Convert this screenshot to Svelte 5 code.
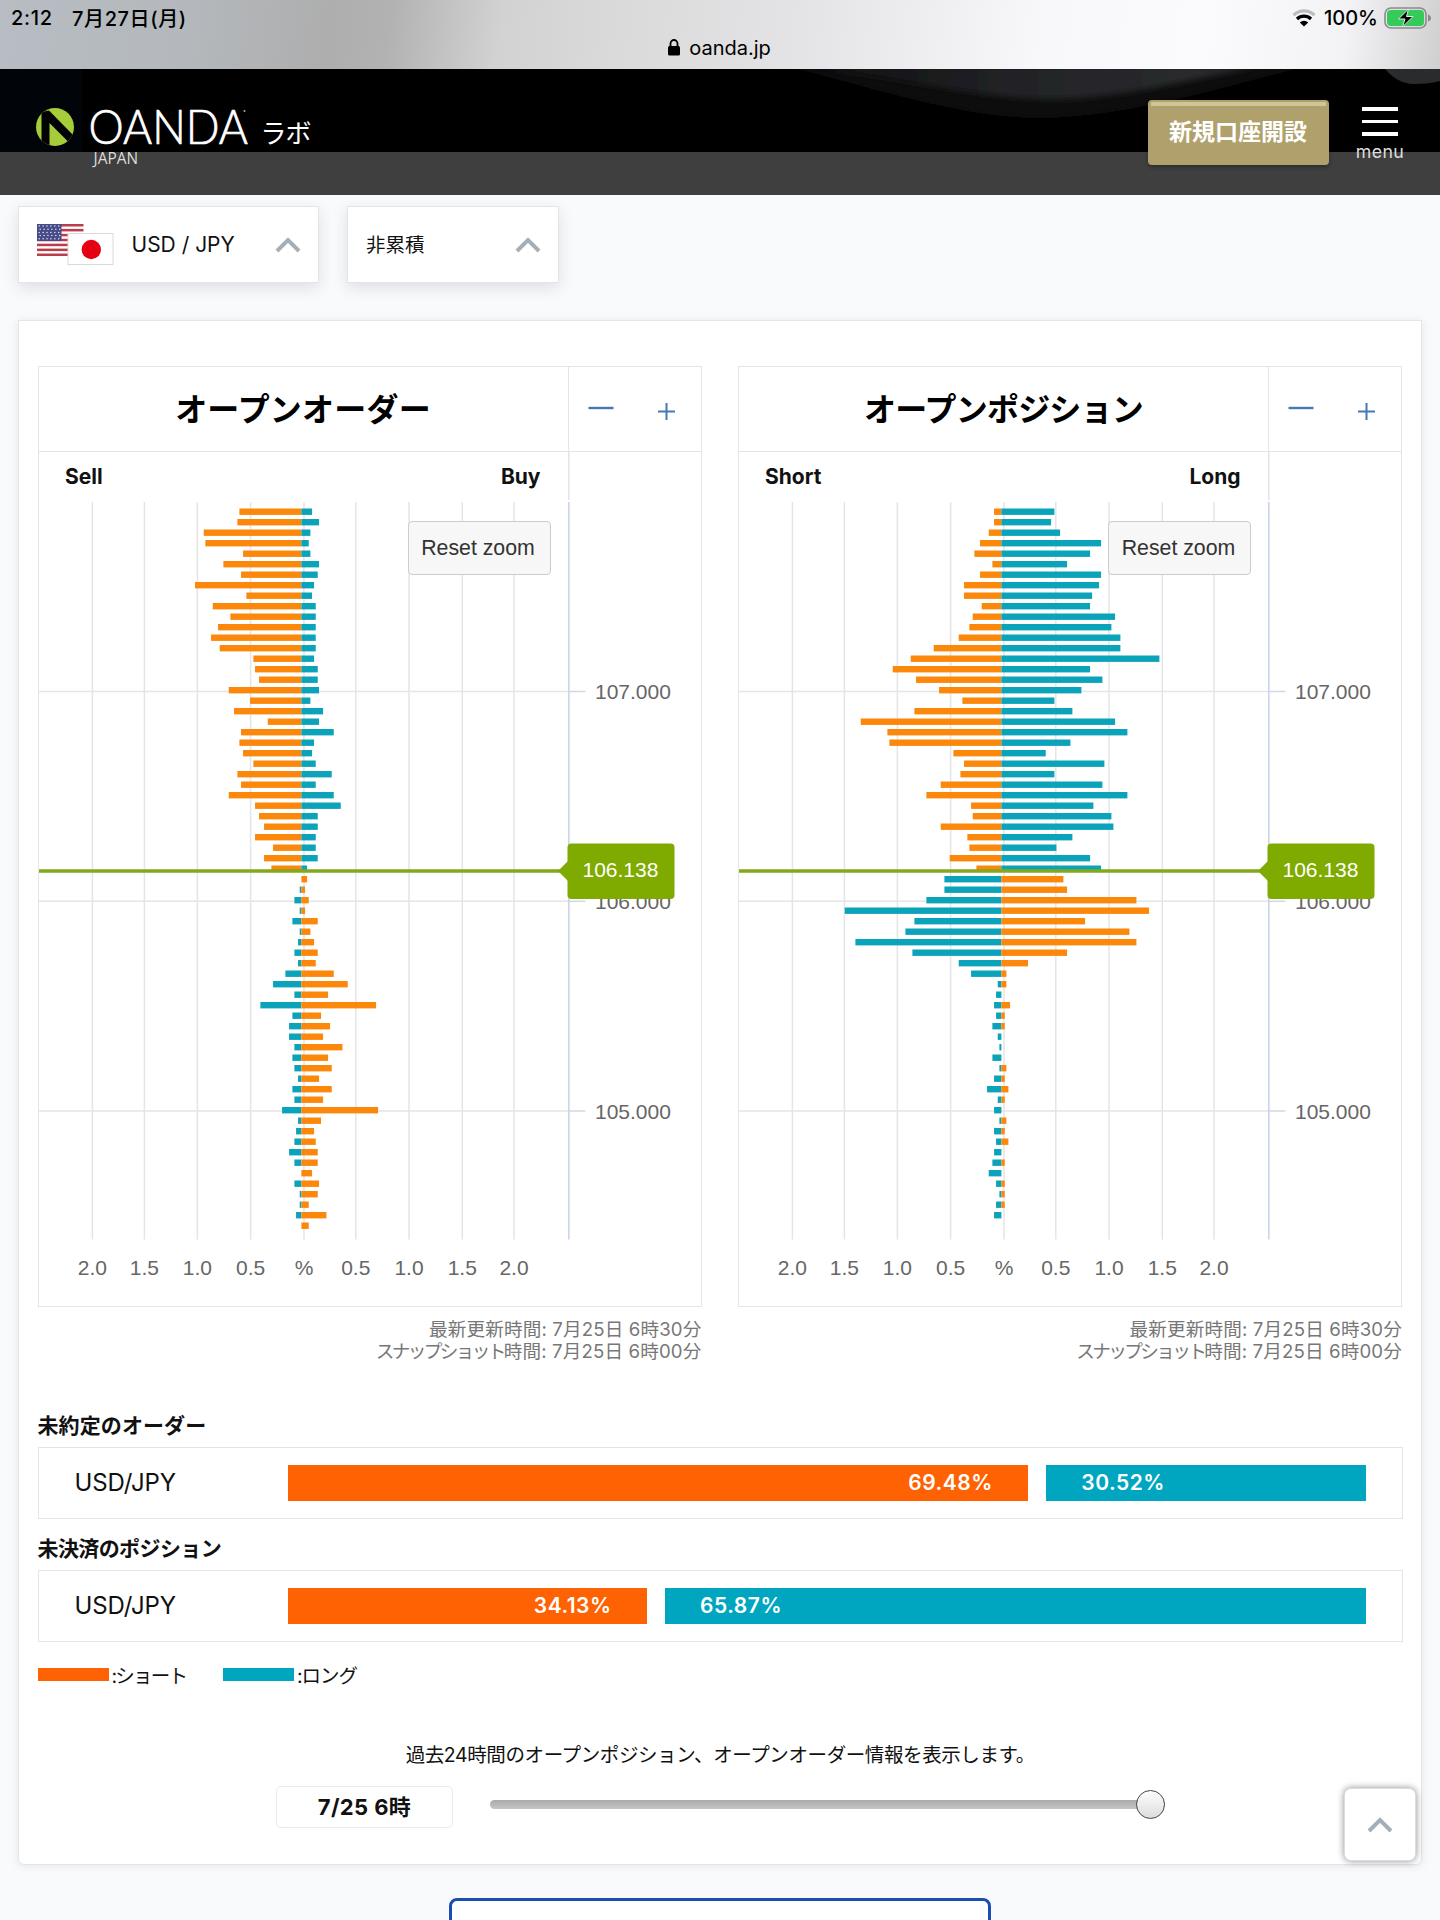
<script>
  // Bar lengths per price level, from high to low: [left, right] in thirds of a pixel.
  const orders = [
    [186, 32], [192, 53], [293, 27], [288, 22], [175, 27], [234, 53], [181, 49], [319, 38], [165, 32], [266, 43],
    [213, 43], [250, 43], [271, 43], [245, 43], [144, 38], [139, 49], [127, 49], [218, 53], [154, 27], [202, 65],
    [101, 53], [181, 97], [186, 38], [175, 32], [144, 43], [192, 91], [181, 43], [218, 97], [139, 118], [127, 49],
    [112, 49], [139, 43], [85, 43], [112, 49], [90, 17],
    [0, 17], [5, 11], [21, 22], [5, 11], [27, 49], [5, 27], [10, 38], [21, 49], [10, 43], [48, 97],
    [85, 139], [21, 80], [123, 224], [27, 59], [37, 86], [37, 65], [21, 123], [27, 80], [21, 91], [10, 53],
    [27, 91], [21, 65], [58, 230], [10, 59], [16, 38], [21, 43], [37, 49], [21, 49], [0, 32], [21, 53],
    [5, 49], [5, 22], [16, 75], [0, 22]
  ];
  const positions = [
    [22, 159], [22, 149], [38, 176], [64, 299], [81, 266], [27, 197], [64, 299], [112, 293], [112, 272], [59, 266],
    [86, 341], [96, 330], [128, 357], [203, 357], [272, 474], [326, 266], [256, 303], [187, 240], [117, 159], [261, 213],
    [422, 341], [342, 378], [336, 207], [144, 133], [112, 309], [123, 159], [182, 303], [225, 378], [91, 276], [86, 330],
    [182, 336], [102, 213], [96, 165], [155, 266], [75, 299],
    [171, 186], [171, 197], [225, 405], [470, 443], [261, 251], [288, 384], [438, 405], [267, 197], [128, 80], [91, 15],
    [11, 15], [16, 0], [22, 26], [16, 10], [27, 10], [11, 0], [6, 0], [27, 0], [6, 15], [22, 10],
    [43, 21], [11, 10], [22, 0], [6, 15], [22, 10], [16, 21], [22, 0], [27, 10], [38, 0], [16, 10],
    [6, 10], [16, 10], [22, 0]
  ];
  const charts = [
    { title: 'オープンオーダー', tight: false, left: 'Sell', right: 'Buy', rows: orders },
    { title: 'オープンポジション', tight: true, left: 'Short', right: 'Long', rows: positions }
  ];
  const ratios = [
    { heading: '未約定のオーダー', tight: false, short: 69.48, long: 30.52 },
    { heading: '未決済のポジション', tight: true, short: 34.13, long: 65.87 }
  ];
  const columns = [
    [91.4, '2.0'], [143.4, '1.5'], [196.4, '1.0'], [249.6, '0.5'], [303, '%'],
    [354.8, '0.5'], [408, '1.0'], [461.3, '1.5'], [513, '2.0']
  ];
  const levels = [[691.5, '107.000'], [901.3, '106.000'], [1111, '105.000']];
  const CENTER = 300.4;
  const FIRST_BELOW = 35;
  const rowTop = (i) => 508.5 + i * 10.5;
</script>

{#snippet chevron()}
  <svg class="chevron" width="26" height="16" viewBox="0 0 26 16"><path d="M2 14 13 3l11 11" fill="none" stroke="#a3afb9" stroke-width="4" /></svg>
{/snippet}

<div class="screen">
  <div class="status">
    <div class="status-row">
      <span class="time">2:12</span>
      <span class="date">7月27日(月)</span>
      <span class="grow"></span>
      <svg class="wifi" width="24" height="18" viewBox="0 0 24 18" fill="none" stroke-width="3.2">
        <path d="M1.5 6.2a15 15 0 0 1 21 0" stroke="#bdbdbf" />
        <path d="M5 10a10 10 0 0 1 14 0" stroke="#000" />
        <path d="M12 17.5 7.8 13.4a6 6 0 0 1 8.4 0z" fill="#000" />
      </svg>
      <span class="charge">100%</span>
      <svg class="battery" width="48" height="22" viewBox="0 0 48 22">
        <rect x="1" y="1" width="41" height="20" rx="6" fill="none" stroke="#8b8b8d" stroke-width="1.6" />
        <rect x="3" y="3" width="37" height="16" rx="4" fill="#35cb5b" />
        <path d="M44 7.5q3 1 3 3.500t-3 3.500z" fill="#8b8b8d" />
        <path d="M24.500 2 14.500 12h6.500l-2.500 8L29 9.500h-6.500z" fill="#000" stroke="#d7f5df" stroke-width="1" />
      </svg>
    </div>
    <div class="address">
      <svg width="12" height="17" viewBox="0 0 12 17"><rect y="7" width="12" height="9.500" rx="1.500" /><path d="M2.500 8V4.500a3.500 3.500 0 0 1 7 0V8" fill="none" stroke="#000" stroke-width="1.800" /></svg>
      <span>oanda.jp</span>
    </div>
  </div>

  <header>
    <svg class="backdrop" width="1440" height="83" viewBox="0 69 1440 83">
      <defs>
        <filter id="soft"><feGaussianBlur stdDeviation="3" /></filter>
        <linearGradient id="sheen" x1="0" y1="0" x2="1" y2="0">
          <stop offset="0" stop-color="#0c0d0f" />
          <stop offset="0.5" stop-color="#232427" />
          <stop offset="1" stop-color="#2c2d30" />
        </linearGradient>
      </defs>
      <rect y="69" width="82" height="83" fill="#01050a" />
      <path d="M760 60 C880 88 960 120 1050 118 C1140 114 1220 88 1330 60Z" fill="#0d0d0f" filter="url(#soft)" />
      <path d="M790 66 C900 76 980 101 1060 99 C1130 96 1180 82 1258 66Z" fill="url(#sheen)" filter="url(#soft)" />
      <path d="M1385 69Q1398 84 1414 84T1440 81V69Z" fill="#2a2b2c" />
    </svg>
    <svg class="logo" width="290" height="84" viewBox="30 90 290 84">
      <defs><clipPath id="disc"><circle cx="55" cy="127" r="19" /></clipPath></defs>
      <circle cx="55" cy="127" r="19" fill="#a5cd39" />
      <g clip-path="url(#disc)" fill="#010204">
        <path d="M41.500 112 49 110.500 74 136 69.500 143 49.500 123V148H41.500Z" />
      </g>
      <text class="brand" x="88.500" y="144" textLength="159.500" lengthAdjust="spacingAndGlyphs">OANDA</text>
      <circle cx="244.500" cy="111" r="1" fill="#aaa" />
      <text class="lab" x="260.500" y="142.500">ラボ</text>
      <text class="country" x="93.500" y="163.500" textLength="44.500" lengthAdjust="spacingAndGlyphs">JAPAN</text>
    </svg>
    <div class="actions">
      <button class="open-account">新規口座開設</button>
      <div class="menu"><i></i><i></i><i></i><span>menu</span></div>
    </div>
  </header>

  <main>
    <div class="filters">
      <div class="select pair">
        <svg width="78" height="42" viewBox="0 0 78 42">
          <rect x="1" width="46.500" height="32" fill="#fff" />
          {#each [0, 1, 2, 3, 4, 5, 6] as s}
            <rect x="1" y={s * 4.92} width="46.500" height="2.500" fill="#bd3c4b" />
          {/each}
          <rect x="1" width="24.500" height="17" fill="#474b88" />
          {#each [2, 5.200, 8.400, 11.600, 14.800] as y, r}
            {#each [0, 1, 2, 3, 4, 5] as c}
              <circle cx={3.200 + c * 3.900 + (r % 2)} cy={y} r="0.750" fill="#e4e5ef" />
            {/each}
          {/each}
          <rect x="32" y="9.500" width="45" height="31" fill="#fff" stroke="#d9dadb" />
          <circle cx="55.300" cy="25.500" r="9.700" fill="#e60012" />
        </svg>
        <span class="pair-name">USD / JPY</span>
        {@render chevron()}
      </div>
      <div class="select mode">
        <span>非累積</span>
        {@render chevron()}
      </div>
    </div>

    <section class="card">
      <div class="charts">
        {#each charts as chart}
          <div class="chart">
            <div class="panel">
              <div class="panel-head">
                <h2 class:tight={chart.tight}>{chart.title}</h2>
                <div class="zoomers">
                  <svg width="134" height="84" viewBox="569 367 134 84" stroke="#4479b1" fill="none">
                    <path d="M588.500 408h25" stroke-width="2.400" />
                    <path d="M658 411.500h17M666.500 403v17" stroke-width="2" />
                  </svg>
                </div>
              </div>
              <div class="plot">
                <svg width="662" height="854" viewBox="38 452 662 854">
                  <path d="M567.800 452V500" stroke="#e3e4e6" stroke-width="1.500" />
                  {#each columns as [x, label]}
                    <path d="M{x} 502V1239.500" stroke="#e4e5e6" stroke-width="1.500" />
                    <text class="tick" {x} y="1275" text-anchor="middle">{label}</text>
                  {/each}
                  {#each levels as [y, label]}
                    <path d="M38 {y}H568" stroke="#e4e5e6" stroke-width="1.500" />
                    <path d="M568 {y}H584.500" stroke="#cfd8e6" stroke-width="1.500" />
                    <text class="tick" x="594" y={y + 7.800}>{label}</text>
                  {/each}
                  <path d="M567.800 502V1239.500" stroke="#ccd6eb" stroke-width="1.700" />
                  {#each chart.rows as [l, r], i}
                    <rect class={i < FIRST_BELOW ? 'orange' : 'teal'} x={CENTER - l / 3} y={rowTop(i)} width={l / 3} height="6.400" />
                    <rect class={i < FIRST_BELOW ? 'teal' : 'orange'} x={CENTER} y={rowTop(i)} width={r / 3} height="6.400" />
                  {/each}
                  <path d="M38 871H560" stroke="#82a81c" stroke-width="3.600" />
                  <path d="M557 871 567.500 860.500V881.500Z" fill="#7faa00" />
                  <rect x="566.500" y="843.500" width="107" height="55.500" rx="4" fill="#7faa00" />
                  <text class="price" x="581.500" y="877.300">106.138</text>
                  <text class="side" x="64" y="483.500">{chart.left}</text>
                  <text class="side" x="539.500" y="483.500" text-anchor="end">{chart.right}</text>
                </svg>
                <button class="reset">Reset zoom</button>
              </div>
            </div>
            <p class="stamp">最新更新時間: 7月25日 6時30分<br /><span class="kana">スナップショット</span>時間: 7月25日 6時00分</p>
          </div>
        {/each}
      </div>

      {#each ratios as ratio}
        <h3 class:tight={ratio.tight}>{ratio.heading}</h3>
        <div class="ratio">
          <span class="name">USD/JPY</span>
          <div class="track">
            <div class="short" style="width: calc({ratio.short}% - 9px)">{ratio.short}%</div>
            <div class="long" style="width: calc({ratio.long}% - 9px)">{ratio.long}%</div>
          </div>
        </div>
      {/each}

      <div class="legend">
        <i class="swatch s"></i><span class="first">:ショート</span>
        <i class="swatch l"></i><span class="second">:ロング</span>
      </div>

      <p class="note">過去24時間のオープンポジション、オープンオーダー情報を表示します。</p>
      <div class="history">
        <div class="moment">7/25 6時</div>
        <div class="slider"><div class="knob"></div></div>
      </div>
      <div class="to-top">{@render chevron()}</div>
    </section>
    <div class="next"></div>
  </main>
</div>

<style>
  :global(body) { margin: 0; }
  .screen {
    width: 1440px; height: 1920px; overflow: hidden; background: #f9fafc; color: #111;
    font-family: Inter, "Noto Sans CJK JP", sans-serif; display: flex; flex-direction: column;
  }
  .screen * { box-sizing: border-box; }
  svg { display: block; flex: none; }
  .grow { flex: 1; }

  .status {
    height: 69px; flex: none; color: #000;
    background: linear-gradient(97deg, #b7bdc3 0, #b4b8bc 190px, #aeaeae 330px, #b2b2b2 390px, #d2d2d2 500px, #dadadb 620px, #e4e3e5 800px, #f8f7f9 1040px, #fbfafc 1200px, #f3f2f4 1340px, #cbcbcc 1450px);
  }
  .status-row { display: flex; align-items: center; height: 35px; padding: 0 8px 0 11px; font-size: 20px; font-weight: 500; }
  .time { width: 61px; letter-spacing: 0.7px; }
  .date { letter-spacing: 0.6px; }
  .wifi { margin-right: 8px; }
  .charge { width: 60px; }
  .address { display: flex; align-items: center; justify-content: center; gap: 9px; height: 25px; font-size: 20px; padding-right: 1px; }

  header { position: relative; height: 126px; flex: none; background: linear-gradient(#000 83px, #3f3f3f 83px); display: flex; justify-content: space-between; }
  .backdrop { position: absolute; left: 0; top: 0; }
  .logo { position: relative; margin: 21px 0 0 30px; }
  .brand { font-family: Lato, sans-serif; font-weight: 300; font-size: 48px; fill: #fff; stroke: #fff; stroke-width: 0.700px; }
  .lab { font-size: 26px; fill: #fff; letter-spacing: -1px; }
  .country { font-family: "Open Sans", sans-serif; font-size: 16.500px; fill: #dcdcdc; }
  .actions { position: relative; display: flex; padding: 31px 30px 0 0; gap: 21px; }
  .open-account {
    width: 181px; height: 65px; margin-left: -1px; padding: 0 1px 5px 0; border: 0; border-radius: 4px; color: #fff;
    background: linear-gradient(#cfc597, #cfc597) 3px 2px / 175px 4px no-repeat #b0a16c;
    box-shadow: 0 2px 4px rgba(0, 0, 0, 0.3); font: 700 23px "Noto Sans CJK JP", sans-serif;
  }
  .menu { display: flex; flex-direction: column; align-items: center; width: 60px; padding-top: 7px; gap: 9px; }
  .menu i { width: 36px; height: 3.500px; background: #fff; }
  .menu span { color: #dedede; font-size: 17.800px; line-height: 20px; margin-top: -3px; letter-spacing: 0.4px; }

  main { flex: 1; display: flex; flex-direction: column; padding: 11px 18px 0; }
  .filters { display: flex; gap: 28px; height: 114px; flex: none; }
  .select { height: 77px; background: #fff; border: 1.500px solid #e3e4e6; box-shadow: 0 5px 14px rgba(40, 50, 60, 0.13); display: flex; align-items: center; justify-content: space-between; }
  .pair { width: 301px; padding: 0 17px 0 17px; }
  .pair-name { font-size: 21px; width: 104px; margin-right: 22px; white-space: nowrap; }
  .mode { width: 212px; padding: 0 17px 0 18px; font-size: 19.500px; }
  .mode span { padding-bottom: 2px; }

  .card { width: 1404px; height: 1545px; flex: none; background: #fff; border: 1.500px solid #e3e5e8; border-radius: 0 0 6px 6px; box-shadow: 0 1px 8px rgba(40, 50, 60, 0.1); padding: 45px 18px 0 18.500px; position: relative; }
  .charts { display: flex; gap: 36.500px; }
  .chart { width: 664px; flex: none; }
  .panel { border: 1.500px solid #e4e5e7; height: 941px; }
  .panel-head { height: 85px; border-bottom: 1.500px solid #e4e5e7; display: flex; }
  h2 { width: 529px; height: 84px; margin: 0; font-size: 32px; line-height: 80px; letter-spacing: 0.200px; text-align: center; font-weight: 700; color: #000; font-family: "Noto Sans CJK JP", sans-serif; }
  h2.tight { letter-spacing: -0.800px; }
  .zoomers { flex: 1; border-left: 1.500px solid #e4e5e7; overflow: hidden; }
  .plot { position: relative; height: 854px; }
  .tick, .price { font: 21px "Liberation Sans", sans-serif; fill: #666; }
  .price { fill: #fff; }
  .side { font-size: 21px; font-weight: 700; fill: #111; }
  .orange { fill: #fb870b; }
  .teal { fill: #0aa3ba; }
  .reset { position: absolute; left: 369px; top: 68.500px; width: 143px; height: 54px; padding: 2px 2px 0 0; border: 1.500px solid #ccc; border-radius: 4px; background: #f7f7f7; color: #333; font: 21.300px "Liberation Sans", sans-serif; }
  .stamp { margin: 12px 0 0; text-align: right; font-size: 18.600px; line-height: 21.500px; letter-spacing: 0.150px; color: #777; white-space: nowrap; }
  .kana { letter-spacing: -2.600px; }

  h3 { margin: 21px 0 0; height: 30px; font-size: 21px; line-height: 17px; letter-spacing: 0.100px; font-weight: 700; color: #111; }
  h3.tight { letter-spacing: -0.600px; }
  .charts + h3 { margin-top: 54.500px; }
  .ratio { height: 72px; border: 1.500px solid #e1e5e8; display: flex; align-items: center; padding: 0 36px; }
  .name { width: 213px; font-size: 24px; letter-spacing: -0.100px; }
  .track { flex: 1; display: flex; gap: 18px; height: 36px; color: #fff; font-weight: 600; font-size: 21px; line-height: 36px; letter-spacing: 0.500px; }
  .short { background: #ff6203; text-align: right; padding-right: 35px; }
  .long { background: #00a6bf; padding-left: 35.500px; }
  .legend { display: flex; align-items: center; height: 65px; font-size: 19.500px; }
  .swatch { width: 71px; height: 13px; margin-right: 3px; }
  .swatch.s { background: #ff6203; }
  .swatch.l { background: #00a6bf; }
  .first { width: 111.500px; letter-spacing: -1.800px; }
  .second { letter-spacing: -1px; }
  .note { margin: 34px 0 0; text-align: center; font-size: 19.500px; line-height: 28px; letter-spacing: -0.400px; white-space: nowrap; }
  .history { display: flex; margin: 17px 0 0 238.500px; gap: 37px; }
  .moment { width: 177px; height: 42px; border: 1.500px solid #e7e9eb; border-radius: 5px; text-align: center; font-size: 22px; line-height: 40px; font-weight: 700; letter-spacing: 0.400px; }
  .slider { width: 675px; height: 9px; margin-top: 14px; border-radius: 5px; background: linear-gradient(#aaa, #c5c5c5); display: flex; align-items: center; justify-content: flex-end; }
  .knob { flex: none; width: 29px; height: 29px; border: 1.800px solid #444; border-radius: 50%; background: linear-gradient(#fdfdfd, #ddd); }
  .to-top { position: absolute; right: 5px; bottom: 3px; width: 72px; height: 73px; border-radius: 7px; border: 1px solid #ddd; background: #fff; box-shadow: 0 0 7px rgba(0, 0, 0, 0.45); display: flex; align-items: center; justify-content: center; }
  .next { width: 542px; height: 60px; flex: none; margin: 33px 0 0 431px; border: 3.500px solid #1b4eaf; border-radius: 8px; background: #fff; }
</style>
